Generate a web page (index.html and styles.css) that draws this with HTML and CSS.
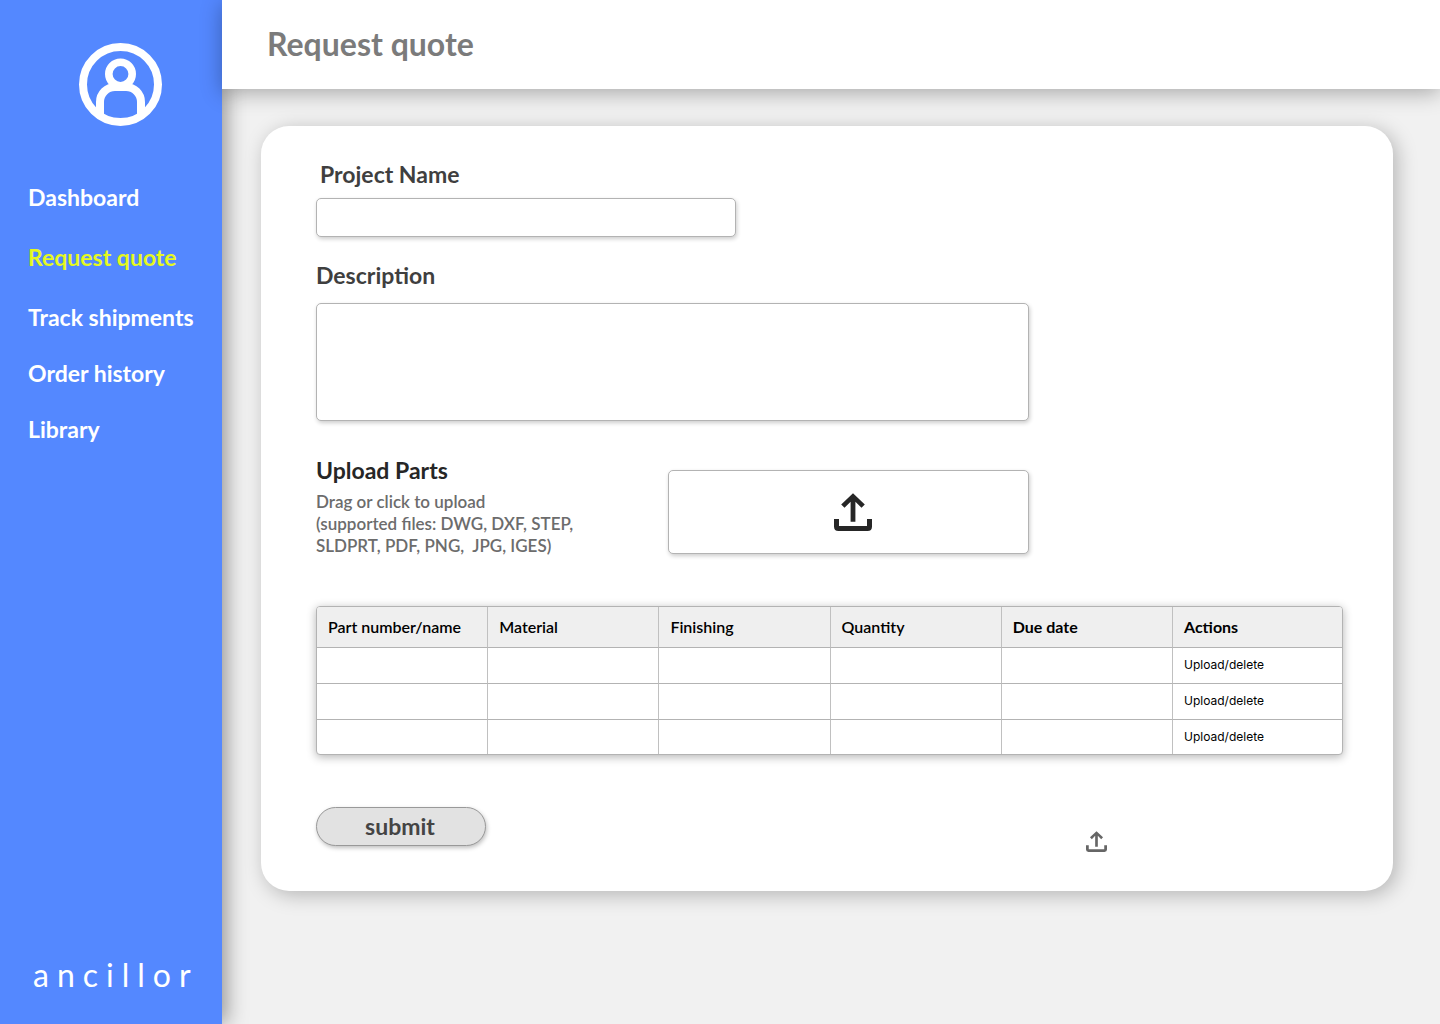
FILE: index.html
```html
<!DOCTYPE html>
<html lang="en">
<head>
    <meta charset="UTF-8">
    <meta name="viewport" content="width=device-width, initial-scale=1.0">
    <title>Request quote</title>
    <link rel="stylesheet" href="styles.css">
</head>
<body>
    <!-- Sidebar -->
    <aside class="sidebar">
        <a href="#" class="profile" aria-label="Profile">
            <svg width="83" height="83" viewBox="0 0 83 83" fill="none" stroke="#fff" stroke-width="8">
                <circle cx="41.5" cy="41.5" r="37.5"/>
                <circle cx="41.5" cy="31" r="11.7" stroke-width="7.6"/>
                <path d="M21 71V59a15 15 0 0 1 15-15h11a15 15 0 0 1 15 15v12"/>
            </svg>
        </a>
        <nav>
            <ul class="menu">
                <li><a href="#">Dashboard</a></li>
                <li><a href="#" class="active">Request quote</a></li>
            </ul>
            <ul class="menu menu-orders">
                <li><a href="#">Track shipments</a></li>
                <li><a href="#">Order history</a></li>
                <li><a href="#">Library</a></li>
            </ul>
        </nav>
        <div class="brand">ancillor</div>
    </aside>

    <div class="page">
        <header class="topbar">
            <h1>Request quote</h1>
        </header>

        <!-- Quote Form -->
        <main>
            <form class="card" action="#" method="POST">
                <div class="field project-field">
                    <label for="project_name">Project Name</label>
                    <input type="text" id="project_name" name="project_name">
                </div>

                <div class="field description-field">
                    <label for="description">Description</label>
                    <textarea id="description" name="description"></textarea>
                </div>

                <!-- Upload Section -->
                <div class="upload">
                    <div class="upload-info">
                        <h2>Upload Parts</h2>
                        <p>Drag or click to upload<br>(supported files: DWG, DXF, STEP,<br>SLDPRT, PDF, PNG,&nbsp; JPG, IGES)</p>
                    </div>
                    <button type="button" class="dropzone" aria-label="Upload parts">
                        <svg width="38" height="38" viewBox="0 0 38 38" fill="currentColor">
                            <path d="M19 .3l11.8 11.2-3.3 3.3-6.1-6v19.9h-4.8V8.8l-6.1 6-3.3-3.3z"/>
                            <path d="M0 26h5v7h28v-7h5v7.5q0 4.5-4.5 4.5h-29Q0 38 0 33.5z"/>
                        </svg>
                    </button>
                </div>

                <!-- Parts Table -->
                <table class="parts">
                    <thead>
                        <tr>
                            <th>Part number/name</th>
                            <th>Material</th>
                            <th>Finishing</th>
                            <th>Quantity</th>
                            <th class="strong">Due date</th>
                            <th class="strong">Actions</th>
                        </tr>
                    </thead>
                    <tbody>
                        <tr><td></td><td></td><td></td><td></td><td></td><td>Upload/delete</td></tr>
                        <tr><td></td><td></td><td></td><td></td><td></td><td>Upload/delete</td></tr>
                        <tr><td></td><td></td><td></td><td></td><td></td><td>Upload/delete</td></tr>
                    </tbody>
                </table>

                <div class="form-footer">
                    <button type="submit" class="submit">submit</button>
                    <button type="button" class="upload-small" aria-label="Upload">
                        <svg width="21" height="21" viewBox="0 0 38 38" fill="currentColor">
                            <path d="M19 .3l11.8 11.2-3.3 3.3-6.1-6v19.9h-4.8V8.8l-6.1 6-3.3-3.3z"/>
                            <path d="M0 26h5v7h28v-7h5v7.5q0 4.5-4.5 4.5h-29Q0 38 0 33.5z"/>
                        </svg>
                    </button>
                </div>
            </form>
        </main>
    </div>
</body>
</html>
```
FILE: styles.css
```css
/* General styling */
* {
    box-sizing: border-box;
}
body {
    display: flex;
    min-height: 100vh;
    margin: 0;
    background-color: #f1f1f1;
    font-family: Lato, sans-serif;
    font-weight: 700;
}
h1, h2, p, ul {
    margin: 0;
    padding: 0;
}
svg {
    display: block;
}
button {
    padding: 0;
    font-family: inherit;
    cursor: pointer;
}

/* Sidebar */
.sidebar {
    display: flex;
    flex-direction: column;
    flex: 0 0 222px;
    padding: 43px 0 29px 28px;
    background-color: #5488ff;
    box-shadow: 4px 0 20px rgba(0, 0, 0, 0.4);
    color: #fff;
}
.profile {
    align-self: flex-start;
    margin: 0 0 58px 51px;
}
.menu {
    display: grid;
    gap: 34px;
    list-style: none;
}
.menu-orders {
    gap: 30px;
    margin-top: 34px;
}
.menu a {
    display: block;
    color: #fff;
    font-size: 23px;
    line-height: 26px;
    text-decoration: none;
}
.menu .active {
    color: #e5f81e;
}
.brand {
    margin-top: auto;
    padding-left: 5px;
    font-size: 32px;
    font-weight: 400;
    line-height: 40px;
    letter-spacing: 8px;
}

/* Header */
.page {
    flex: 1;
    min-width: 0;
}
.topbar {
    position: relative;
    padding: 24px 45px 25px;
    background-color: #fff;
    box-shadow: 0 4px 20px rgba(0, 0, 0, 0.3);
}
.topbar h1 {
    color: #7b7b7b;
    font-size: 32px;
    line-height: 40px;
}

/* Form card */
.card {
    position: relative;
    margin: 37px 47px 40px 39px;
    padding: 35px 50px 39px 55px;
    border-radius: 28px;
    background-color: #fff;
    box-shadow: 4px 4px 20px rgba(0, 0, 0, 0.25);
}
.field label {
    display: block;
    color: #3f3f3f;
    font-size: 23px;
    line-height: 26px;
}
.field input, .field textarea, .dropzone {
    display: block;
    width: 100%;
    border: 1px solid #b3b3b3;
    border-radius: 5px;
    background-color: #fff;
    box-shadow: 1px 2px 4px rgba(0, 0, 0, 0.2);
    font: inherit;
}
.project-field {
    max-width: 420px;
    margin-bottom: 25px;
}
.project-field label {
    margin-bottom: 11px;
    padding-left: 4px;
}
.field input {
    height: 39px;
    padding: 0 12px;
}
.description-field {
    max-width: 713px;
    margin-bottom: 36px;
}
.description-field label {
    margin-bottom: 15px;
}
.field textarea {
    height: 118px;
    padding: 12px;
    resize: none;
}

/* Upload */
.upload {
    display: flex;
    justify-content: space-between;
    align-items: flex-start;
    max-width: 713px;
    margin-bottom: 49px;
}
.upload h2 {
    margin-bottom: 8px;
    color: #262626;
    font-size: 23px;
    line-height: 26px;
}
.upload p {
    color: #6c6c6c;
    font-size: 17px;
    font-weight: 600;
    line-height: 22px;
}
.dropzone {
    display: grid;
    place-items: center;
    width: 361px;
    height: 84px;
    margin-top: 13px;
    padding-left: 8px;
    color: #262626;
}

/* Parts table */
.parts {
    width: 100%;
    table-layout: fixed;
    border: 1px solid #b3b3b3;
    border-radius: 4px;
    border-spacing: 0;
    background-color: #fff;
    box-shadow: 0 2px 10px rgba(0, 0, 0, 0.3);
    overflow: hidden;
}
.parts th, .parts td {
    padding: 0 11px 2px;
    border-right: 1px solid #c0c0c0;
    border-bottom: 1px solid #b3b3b3;
    color: #000;
    text-align: left;
}
.parts th {
    height: 41px;
    background-color: #efefef;
    font-size: 16px;
    font-weight: 600;
}
.parts .strong {
    font-weight: 700;
}
.parts td {
    height: 36px;
    font-family: Inter, sans-serif;
    font-size: 12px;
    font-weight: 400;
}
.parts th:last-child, .parts td:last-child {
    width: 169px;
    border-right: none;
}
.parts tr:last-child td {
    height: 34px;
    border-bottom: none;
}

/* Footer */
.form-footer {
    display: flex;
    justify-content: space-between;
    height: 45px;
    margin-top: 52px;
}
.submit {
    width: 170px;
    height: 39px;
    padding: 0 2px 2px 0;
    border: 1px solid #999;
    border-radius: 20px;
    background-color: #e2e2e2;
    box-shadow: 1px 2px 4px rgba(0, 0, 0, 0.25);
    color: #444;
    font-size: 23px;
    font-weight: 700;
}
.form-footer .upload-small {
    align-self: flex-end;
    margin-right: 23%;
    border: none;
    background: none;
    color: #666;
}
```
